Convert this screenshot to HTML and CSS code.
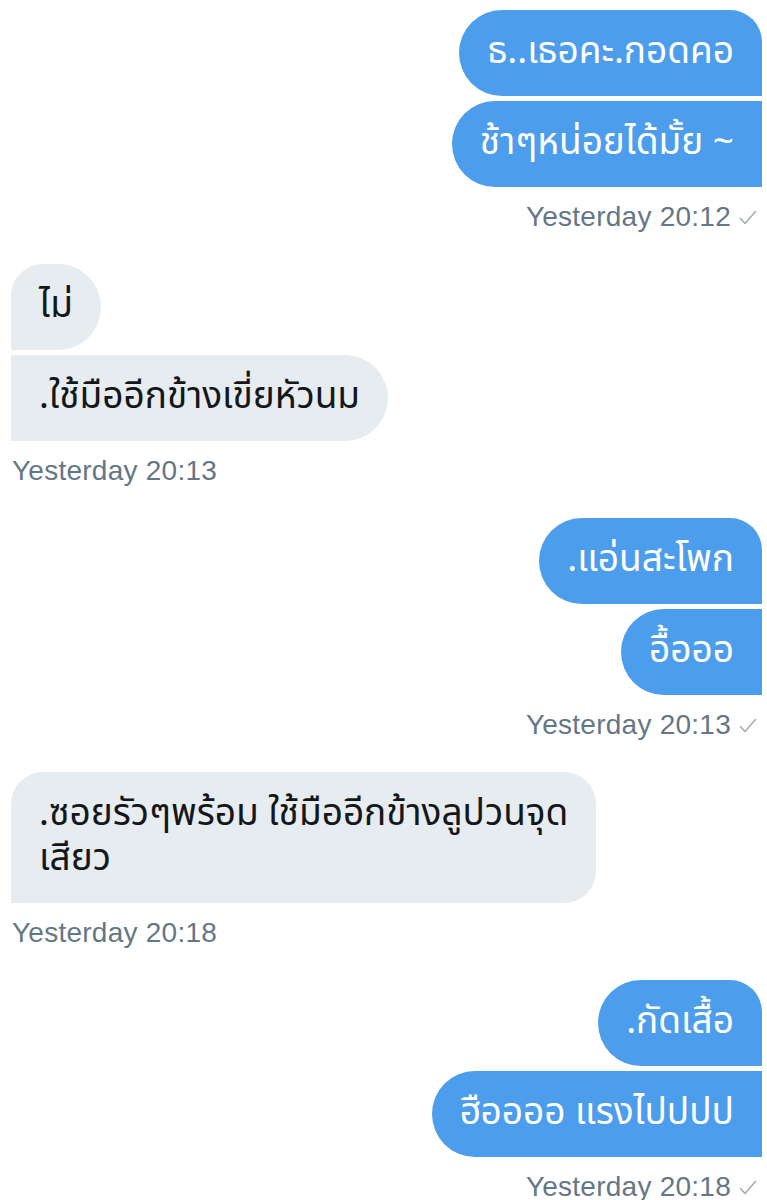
FILE: index.html
```html
<!DOCTYPE html>
<html lang="th">
<head>
<meta charset="utf-8">
<title>Messages</title>
<link rel="stylesheet" href="styles.css">
</head>
<body>
<main class="chat">
  <section class="group group-out">
    <div class="bubble out first">ธ..เธอคะ.กอดคอ</div>
    <div class="bubble out">ช้าๆหน่อยได้มั้ย ~</div>
    <div class="meta">Yesterday 20:12 <svg class="check" viewBox="0 0 18 16" width="18" height="16"><polyline points="1.5,8.5 6,13.5 16.5,1.5" fill="none" stroke="#a4adb7" stroke-width="1.6" stroke-linecap="round" stroke-linejoin="round"/></svg></div>
  </section>

  <section class="group group-in">
    <div class="bubble in first">ไม่</div>
    <div class="bubble in">.ใช้มืออีกข้างเขี่ยหัวนม</div>
    <div class="meta">Yesterday 20:13</div>
  </section>

  <section class="group group-out">
    <div class="bubble out first">.แอ่นสะโพก</div>
    <div class="bubble out">อื้อออ</div>
    <div class="meta">Yesterday 20:13 <svg class="check" viewBox="0 0 18 16" width="18" height="16"><polyline points="1.5,8.5 6,13.5 16.5,1.5" fill="none" stroke="#a4adb7" stroke-width="1.6" stroke-linecap="round" stroke-linejoin="round"/></svg></div>
  </section>

  <section class="group group-in">
    <div class="bubble in first multi">.ซอยรัวๆพร้อม ใช้มืออีกข้างลูปวนจุด<br>เสียว</div>
    <div class="meta">Yesterday 20:18</div>
  </section>

  <section class="group group-out">
    <div class="bubble out first">.กัดเสื้อ</div>
    <div class="bubble out">ฮืออออ แรงไปปปป</div>
    <div class="meta">Yesterday 20:18 <svg class="check" viewBox="0 0 18 16" width="18" height="16"><polyline points="1.5,8.5 6,13.5 16.5,1.5" fill="none" stroke="#a4adb7" stroke-width="1.6" stroke-linecap="round" stroke-linejoin="round"/></svg></div>
  </section>
</main>
</body>
</html>
```

FILE: styles.css
```css
* { box-sizing: border-box; }

html, body {
  margin: 0;
  padding: 0;
  background: #ffffff;
}

body {
  font-family: "Noto Sans Thai", "Noto Sans Thai UI", "Thonburi", "Noto Sans", "DejaVu Sans", sans-serif;
  overflow: hidden;
}

.chat {
  display: flex;
  flex-direction: column;
  gap: 30px;
  padding: 10px 5px 0 11px;
}

.group {
  display: flex;
  flex-direction: column;
  gap: 5px;
}

.group-out { align-items: flex-end; }
.group-in { align-items: flex-start; }

.bubble {
  font-size: 37px;
  line-height: 45px;
  padding: 20px 28px 21px;
  white-space: nowrap;
}

.bubble.out {
  background: #4c9deb;
  color: #ffffff;
  border-radius: 43px 0 0 43px;
}
.bubble.out.first {
  border-radius: 43px 32px 0 43px;
}

.bubble.in {
  background: #e6ecf0;
  color: #14171a;
  border-radius: 0 43px 43px 0;
}
.bubble.in.first {
  border-radius: 32px 43px 43px 0;
}
.bubble.in.multi {
  border-radius: 32px 32px 32px 0;
}

.meta {
  font-family: "Liberation Sans", Arial, sans-serif;
  font-size: 28px;
  letter-spacing: 0.25px;
  line-height: 34px;
  color: #657786;
  margin-top: 8px;
  display: flex;
  align-items: center;
  gap: 8px;
}

.group-out .meta { padding-right: 5px; }
.group-in .meta { padding-left: 1px; }

.check { display: block; margin-top: 2px; }
```
